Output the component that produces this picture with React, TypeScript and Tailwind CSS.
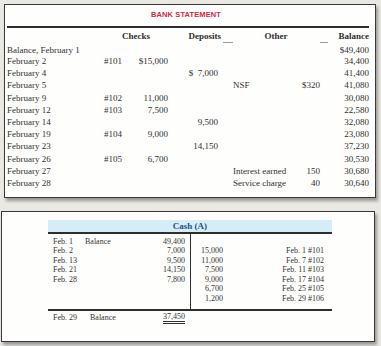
const serif = { fontFamily: '"Liberation Serif", "Times New Roman", serif' };

type Row = {
  label: string;
  chk?: string;
  checks?: string;
  deposits?: string;
  other?: string;
  otherAmt?: string;
  balance: string;
};

const rows: Row[] = [
  { label: 'Balance, February 1', balance: '$49,400' },
  { label: 'February 2', chk: '#101', checks: '$15,000', balance: '34,400' },
  { label: 'February 4', deposits: '$  7,000', balance: '41,400' },
  { label: 'February 5', other: 'NSF', otherAmt: '$320', balance: '41,080' },
  { label: 'February 9', chk: '#102', checks: '11,000', balance: '30,080' },
  { label: 'February 12', chk: '#103', checks: '7,500', balance: '22,580' },
  { label: 'February 14', deposits: '9,500', balance: '32,080' },
  { label: 'February 19', chk: '#104', checks: '9,000', balance: '23,080' },
  { label: 'February 23', deposits: '14,150', balance: '37,230' },
  { label: 'February 26', chk: '#105', checks: '6,700', balance: '30,530' },
  { label: 'February 27', other: 'Interest earned', otherAmt: '150', balance: '30,680' },
  { label: 'February 28', other: 'Service charge', otherAmt: '40', balance: '30,640' },
];

const debits = [
  { date: 'Feb. 1', note: 'Balance', amt: '49,400' },
  { date: 'Feb. 2', note: '', amt: '7,000' },
  { date: 'Feb. 13', note: '', amt: '9,500' },
  { date: 'Feb. 21', note: '', amt: '14,150' },
  { date: 'Feb. 28', note: '', amt: '7,800' },
];

const credits = [
  { amt: '', ref: '' },
  { amt: '15,000', ref: 'Feb. 1 #101' },
  { amt: '11,000', ref: 'Feb. 7 #102' },
  { amt: '7,500', ref: 'Feb. 11 #103' },
  { amt: '9,000', ref: 'Feb. 17 #104' },
  { amt: '6,700', ref: 'Feb. 25 #105' },
  { amt: '1,200', ref: 'Feb. 29 #106' },
];

const cols = 'grid grid-cols-[97px_24px_40px_50px_15px_67px_20px_49px] items-center';

function BankStatement() {
  return (
    <div className="ml-[4px] mt-[4px] w-[372px] h-[194px] border border-[#3a3a3a] bg-[#fefefd] shadow-[2px_3px_3px_rgba(0,0,0,0.35)]">
      <div
        className="pt-[5px] h-[15px] leading-[10px] text-center pr-[8px] text-[7.5px] font-bold tracking-[0.1px] text-[#d5283d]"
        style={{ fontFamily: '"Liberation Sans", Arial, sans-serif' }}
      >
        BANK STATEMENT
      </div>
      <div className="ml-[2px] mt-[6px] w-[362px] h-[1.5px] bg-[#2e2e2e]" />
      <div
        className="ml-[2px] mt-[2.5px] grid grid-cols-[97px_64px_53px_110px_38px] h-[12px] leading-[12px] text-[9px] font-bold text-[#2e2e2e]"
        style={serif}
      >
        <div />
        <div className="text-center">Checks</div>
        <div className="text-right">Deposits</div>
        <div className="text-center">Other</div>
        <div className="text-right">Balance</div>
      </div>
      <div className="flex h-[3px] items-start">
        <div className="ml-[218px] w-[10px] h-[1px] bg-[#9a9a9a]" />
        <div className="ml-[87px] w-[8px] h-[1px] bg-[#9a9a9a]" />
      </div>
      <div className="ml-[2px] text-[9px] text-[#303030]" style={serif}>
        {rows.map((r, i) => (
          <div key={r.label} className={`${cols} ${i === 0 ? 'h-[10px] leading-[10px]' : 'h-[12.2px] leading-[12px]'}`}>
            <div className="whitespace-nowrap">{r.label}</div>
            <div>{r.chk}</div>
            <div className="text-right">{r.checks}</div>
            <div className="text-right whitespace-pre">{r.deposits}</div>
            <div />
            <div className="whitespace-nowrap">{r.other}</div>
            <div className="text-right">{r.otherAmt}</div>
            <div className="text-right">{r.balance}</div>
          </div>
        ))}
      </div>
    </div>
  );
}

function CashAccount() {
  return (
    <div className="ml-[1px] mt-[13px] w-[374px] h-[131px] border border-[#3a3a3a] bg-[#fefefd] shadow-[2px_3px_3px_rgba(0,0,0,0.35)]">
      <div className="ml-[46px] mt-[8px] w-[284px] text-[8px] text-[#333]" style={serif}>
        <div className="h-[12px] leading-[12px] bg-[#d6ecf7] text-center text-[9px] font-bold text-[#1f4f86]">
          Cash (A)
        </div>
        <div className="h-[1.5px] bg-[#2e2e2e]" />
        <div className="flex h-[75.5px]">
          <div className="w-[143px] pt-[3px] border-r border-[#2e2e2e]">
            {debits.map((d) => (
              <div key={d.date} className="flex h-[9.6px] leading-[9.6px]">
                <div className="w-[37px] pl-[5px]">{d.date}</div>
                <div className="w-[60px]">{d.note}</div>
                <div className="w-[40px] text-right">{d.amt}</div>
              </div>
            ))}
          </div>
          <div className="w-[141px] pt-[3px]">
            {credits.map((c, i) => (
              <div key={i} className="flex h-[9.6px] leading-[9.6px]">
                <div className="w-[32px] text-right">{c.amt}</div>
                <div className="w-[101px] text-right">{c.ref}</div>
              </div>
            ))}
          </div>
        </div>
        <div className="h-[1.5px] bg-[#2e2e2e]" />
        <div className="flex h-[14px] items-center">
          <div className="w-[42px] pl-[5px]">Feb. 29</div>
          <div className="w-[55px]">Balance</div>
          <div className="w-[40px] text-right">
            <span className="inline-block leading-[9px] border-b-[3px] border-double border-[#333]">37,450</span>
          </div>
        </div>
      </div>
    </div>
  );
}

export default function App() {
  return (
    <div className="w-[381px] h-[346px] overflow-hidden bg-[#e9e8e3] pt-px">
      <div className="-mt-px">
        <BankStatement />
        <CashAccount />
      </div>
    </div>
  );
}
